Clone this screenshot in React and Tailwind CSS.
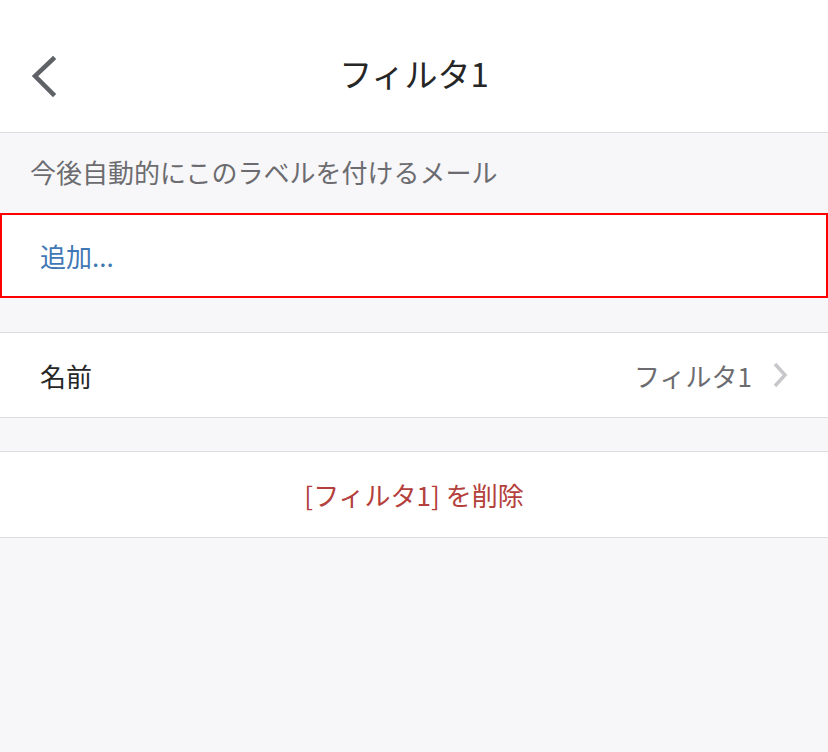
import React from 'react';

const font = { fontFamily: '"Noto Sans CJK JP", "Noto Sans", sans-serif' };

const App = () => {
  return (
    <div className="min-h-[752px] w-[828px] bg-[#f7f7f9]" style={font}>
      <header className="relative flex h-[133px] items-center justify-center border-b border-[#dcdcdf] bg-white">
        <button className="absolute left-[27px] top-[51px] p-1">
          <svg width="28" height="44" viewBox="0 0 28 44" fill="none">
            <path d="M22 4 L4 21 L22 39" stroke="#5f6266" strokeWidth="4.5" strokeLinecap="square" />
          </svg>
        </button>
        <h1 className="pt-[16px] text-[33px] font-normal text-[#262626]">フィルタ1</h1>
      </header>

      <div className="flex h-[80px] items-center px-[30px] pb-[4px] text-[26px] text-[#6c6c70]">
        今後自動的にこのラベルを付けるメール
      </div>

      <div className="flex h-[85px] items-center border-2 border-[#ff0000] bg-white px-[38px] text-[26px] text-[#3f78b5]">
        追加...
      </div>

      <div className="h-[34px]" />

      <div className="flex h-[86px] items-center justify-between border-y border-[#dcdcdf] bg-white pl-[40px] pr-[40px] text-[26px]">
        <span className="text-[#262626]">名前</span>
        <span className="flex items-center gap-[20px] text-[#6c6c70]">
          フィルタ1
          <svg width="16" height="26" viewBox="0 0 16 26" fill="none">
            <path d="M3 2 L13 13 L3 24" stroke="#c7c7cc" strokeWidth="3.5" />
          </svg>
        </span>
      </div>

      <div className="h-[33px]" />

      <div className="flex h-[87px] items-center justify-center border-y border-[#dcdcdf] bg-white text-[26px] text-[#b3403c]">
        [フィルタ1] を削除
      </div>
    </div>
  );
};

export default App;
